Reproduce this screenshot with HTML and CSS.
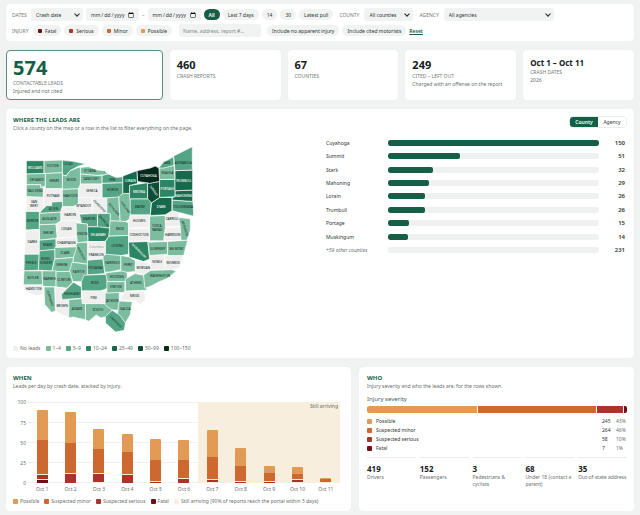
FILE: index.html
```html
<!DOCTYPE html>
<html lang="en">
<head>
<meta charset="utf-8">
<title>Crash leads</title>
<link rel="stylesheet" href="styles.css">
</head>
<body>
<main class="page">
  <form class="card filters">
    <div class="filter-row">
      <label class="caps" for="basis">Dates</label>
      <span class="select basis"><select id="basis"><option>Crash date</option></select></span>
      <input class="date" type="date" aria-label="From">
      <span class="dash">–</span>
      <input class="date" type="date" aria-label="To">
      <button type="button" class="pill active">All</button>
      <button type="button" class="pill">Last 7 days</button>
      <button type="button" class="pill">14</button>
      <button type="button" class="pill">30</button>
      <button type="button" class="pill">Latest pull</button>
      <label class="caps lead" for="county">County</label>
      <span class="select county"><select id="county"><option>All counties</option></select></span>
      <label class="caps lead" for="agency">Agency</label>
      <span class="select agency"><select id="agency"><option>All agencies</option></select></span>
    </div>
    <div class="filter-row">
      <span class="caps injury">Injury</span>
      <button type="button" class="pill"><i class="dot fatal"></i>Fatal</button>
      <button type="button" class="pill"><i class="dot serious"></i>Serious</button>
      <button type="button" class="pill"><i class="dot minor"></i>Minor</button>
      <button type="button" class="pill"><i class="dot possible"></i>Possible</button>
      <input class="search" type="text" aria-label="Search" placeholder="Name, address, report #…">
      <button type="button" class="pill">Include no apparent injury</button>
      <button type="button" class="pill">Include cited motorists</button>
      <a class="reset" href="#">Reset</a>
    </div>
  </form>

  <section class="metrics">
    <div class="card metric hero"><strong>574</strong><span class="caps">Contactable leads</span><small>Injured and not cited</small></div>
    <div class="card metric"><strong>460</strong><span class="caps">Crash reports</span></div>
    <div class="card metric"><strong>67</strong><span class="caps">Counties</span></div>
    <div class="card metric"><strong>249</strong><span class="caps">Cited – left out</span><small>Charged with an offense on the report</small></div>
    <div class="card metric range"><strong>Oct 1 – Oct 11</strong><span class="caps">Crash dates</span><small>2026</small></div>
  </section>

  <section class="card where">
    <header class="head">
      <div><h2>Where the leads are</h2><p>Click a county on the map or a row in the list to filter everything on the page.</p></div>
      <div class="toggle"><button type="button" class="on">County</button><button type="button">Agency</button></div>
    </header>
    <div class="where-body">
      <div>
        <svg class="map" id="map" viewBox="36 9 530 576" role="img" aria-label="Leads by county"></svg>
        <ul class="legend">
          <li><i class="b0"></i>No leads</li><li><i class="b1"></i>1–4</li><li><i class="b2"></i>5–9</li><li><i class="b3"></i>10–24</li><li><i class="b4"></i>25–49</li><li><i class="b5"></i>50–99</li><li><i class="b6"></i>100–150</li>
        </ul>
      </div>
      <ul class="ranks">
        <li><span>Cuyahoga</span><div class="track"><div style="width:100%"></div></div><b>150</b></li>
        <li><span>Summit</span><div class="track"><div style="width:34%"></div></div><b>51</b></li>
        <li><span>Stark</span><div class="track"><div style="width:21.3%"></div></div><b>32</b></li>
        <li><span>Mahoning</span><div class="track"><div style="width:19.3%"></div></div><b>29</b></li>
        <li><span>Lorain</span><div class="track"><div style="width:17.3%"></div></div><b>26</b></li>
        <li><span>Trumbull</span><div class="track"><div style="width:17.3%"></div></div><b>26</b></li>
        <li><span>Portage</span><div class="track"><div style="width:10%"></div></div><b>15</b></li>
        <li><span>Muskingum</span><div class="track"><div style="width:9.3%"></div></div><b>14</b></li>
        <li><em>+59 other counties</em><div class="track"></div><b>231</b></li>
      </ul>
    </div>
  </section>

  <div class="bottom">
    <section class="card when">
      <h2>When</h2><p>Leads per day by crash date, stacked by injury.</p>
      <div class="chart">
        <div class="axis"><span>100</span><span>75</span><span>50</span><span>25</span><span>0</span></div>
        <div class="plot">
          <div class="grid"><i></i><i></i><i></i><i></i><i></i></div>
          <div class="arriving">Still arriving</div>
          <div class="days" id="days"></div>
        </div>
        <div class="ticks"><span>Oct 1</span><span>Oct 2</span><span>Oct 3</span><span>Oct 4</span><span>Oct 5</span><span>Oct 6</span><span>Oct 7</span><span>Oct 8</span><span>Oct 9</span><span>Oct 10</span><span>Oct 11</span></div>
      </div>
      <ul class="legend">
        <li><i class="possible"></i>Possible</li><li><i class="minor"></i>Suspected minor</li><li><i class="serious"></i>Suspected serious</li><li><i class="fatal"></i>Fatal</li><li><i class="late"></i>Still arriving (90% of reports reach the portal within 5 days)</li>
      </ul>
    </section>

    <section class="card who">
      <h2>Who</h2><p>Injury severity and who the leads are, for the rows shown.</p>
      <h3>Injury severity</h3>
      <div class="split"><i class="possible" style="flex-grow:245"></i><i class="minor" style="flex-grow:264"></i><i class="serious" style="flex-grow:58"></i><i class="fatal" style="flex-grow:7"></i></div>
      <table class="severity">
        <tr><th><i class="possible"></i>Possible</th><td>245</td><td>43%</td></tr>
        <tr><th><i class="minor"></i>Suspected minor</th><td>264</td><td>46%</td></tr>
        <tr><th><i class="serious"></i>Suspected serious</th><td>58</td><td>10%</td></tr>
        <tr><th><i class="fatal"></i>Fatal</th><td>7</td><td>1%</td></tr>
      </table>
      <div class="people">
        <div><b>419</b><span>Drivers</span></div>
        <div><b>152</b><span>Passengers</span></div>
        <div><b>3</b><span>Pedestrians &amp; cyclists</span></div>
        <div><b>68</b><span>Under 18 (contact a parent)</span></div>
        <div><b>35</b><span>Out-of-state address</span></div>
      </div>
    </section>
  </div>
</main>
<script src="app.js"></script>
</body>
</html>
```
FILE: styles.css
```css
* { box-sizing: border-box; }
body { margin: 0; background: #f0f3f2; color: #2c3532; font: 5px/8px "Noto Sans", "Open Sans", sans-serif; }
h2, h3, p, ul { margin: 0; padding: 0; }
ul { list-style: none; }
i { font-style: normal; }
button, input, select { font: inherit; color: inherit; margin: 0; border: 0; }
.page { padding: 4px 6px; }
.card { background: #fff; border-radius: 4px; box-shadow: 0 0 1px #dfe5e2; }

.caps { color: #727a77; font-size: 5px; text-transform: uppercase; }
.filters { padding: 4px 6px; display: grid; gap: 3px; }
.filter-row { display: flex; align-items: center; gap: 3px; height: 13px; }
.filter-row > .caps { width: 16px; }
.filter-row > .injury { width: 18px; }
.filter-row > .lead { width: auto; margin: 0 2px 0 3px; }
.select { position: relative; display: block; height: 13px; }
.select::after { content: ""; position: absolute; right: 4px; top: 4px; width: 3px; height: 3px; border: solid #222; border-width: 0 1px 1px 0; transform: rotate(45deg); }
.select select { appearance: none; width: 100%; height: 100%; padding: 0 5px; border-radius: 3px; background: #f0f3f2; }
.basis { width: 52px; }
.county { width: 49px; }
.agency { width: 110px; }
.date { width: 53px; height: 13px; padding: 0 5px 0 4px; border-radius: 3px; background: #f0f3f2; }
.date::-webkit-calendar-picker-indicator { margin: 0; padding: 0; width: 6px; height: 6px; }
.date::-webkit-datetime-edit,
.date::-webkit-datetime-edit-fields-wrapper,
.date::-webkit-datetime-edit-text { padding: 0; }
.dash { color: #727a77; }
.pill { height: 11px; padding: 0 5px; border-radius: 6px; background: #f0f3f2; white-space: nowrap; display: flex; align-items: center; gap: 3px; }
.pill.active { background: #155f47; color: #fff; font-weight: 600; }
.dot { width: 4px; height: 4px; border-radius: 1px; }
.search { width: 82px; height: 13px; margin: 0 3px 0 4px; padding: 0 4px; border-radius: 3px; background: #f0f3f2; }
.search::placeholder { color: #858c89; }
.reset { color: #155f47; font-weight: 600; }

.metrics { display: grid; grid-template-columns: 157fr repeat(4, 111fr); gap: 7px; margin: 9px 0; }
.metric { min-height: 50px; padding: 7px; display: flex; flex-direction: column; }
.metric strong { color: #16201d; font-size: 11px; line-height: 15px; }
.metric .caps { line-height: 8px; }
.metric small { font-size: 5px; line-height: 9px; color: #69716e; }
.hero { border: 1px solid #5c8d7c; padding: 6px 6px 3px; }
.hero strong { color: #155f47; font-size: 20px; line-height: 22px; }
.range strong { font-size: 8px; line-height: 11px; }

h2 { font-size: 6px; line-height: 8px; font-weight: 700; color: #155f47; text-transform: uppercase; }
p { line-height: 8px; color: #69716e; }
.where { padding: 7px 7px 6px; }
.head { display: flex; justify-content: space-between; align-items: flex-start; }
.toggle { display: flex; border: 1px solid #e8ecea; border-radius: 4px; overflow: hidden; }
.toggle button { width: 28px; height: 10px; padding: 0; background: #fff; }
.toggle .on { background: #155f47; color: #fff; font-weight: 600; }
.where-body { display: grid; grid-template-columns: 306fr 301fr; gap: 7px; }
.map { display: block; width: 177px; margin: 11px 0 9px 9px; }
.map text { font: 500 9px "Noto Sans", sans-serif; text-anchor: middle; fill: #20352d; }
.map text.light { fill: #fff; }
.map text.city { fill: #999; font-weight: 400; }
.map path { stroke: #fff; stroke-width: 2; stroke-linejoin: round; }
.b0 { fill: #efefef; background: #efefef; }
.b1 { fill: #7cbda0; background: #7cbda0; }
.b2 { fill: #53a585; background: #53a585; }
.b3 { fill: #2c8564; background: #2c8564; }
.b4 { fill: #17694d; background: #17694d; }
.b5 { fill: #0d4d38; background: #0d4d38; }
.b6 { fill: #052a1e; background: #052a1e; }
.legend { display: flex; gap: 5px; color: #69716e; white-space: nowrap; }
.legend li { display: flex; align-items: center; gap: 2px; }
.legend i { width: 5px; height: 5px; border-radius: 1px; }
.ranks { display: grid; grid-auto-rows: 1fr; height: 121px; margin-top: 4px; }
.ranks li { display: grid; grid-template-columns: 57px 1fr 20px; column-gap: 5px; align-items: center; }
.ranks em { color: #69716e; }
.ranks b { text-align: right; font-weight: 600; font-size: 6px; padding-right: 3px; }
.ranks b { padding-right: 2px; }
.track { height: 6px; border-radius: 2px; background: #eef1f0; overflow: hidden; margin-right: 3px; }
.track div { height: 100%; border-radius: 2px; background: #155f47; }

.possible { background: #e39a54; }
.minor { background: #cd6830; }
.serious { background: #aa342a; }
.fatal { background: #6b1118; }
.late { background: #f7eedd; }

.bottom { display: grid; grid-template-columns: 345fr 275fr; gap: 8px; margin-top: 9px; }
.when, .who { min-height: 144px; padding: 7px 7px 5px; }
.chart { display: grid; grid-template-columns: 14px 1fr; column-gap: 1px; margin: 12px 4px 4px 0; }
.axis { display: flex; flex-direction: column; justify-content: space-between; height: 89px; margin: -4px 0; text-align: right; color: #69716e; padding-right: 1px; }
.plot { display: grid; height: 81px; }
.plot > * { grid-area: 1 / 1; }
.grid { display: flex; flex-direction: column; justify-content: space-between; }
.grid i { height: 1px; background: #eef1f0; }
.arriving { justify-self: end; width: calc(100% * 5 / 11); background: #f7eedd; text-align: right; padding-right: 2px; color: #69716e; }
.days { display: grid; grid-template-columns: repeat(11, 1fr); align-items: end; justify-items: center; height: 81px; }
.day { width: 11px; display: flex; flex-direction: column; border-radius: 1px 1px 0 0; overflow: hidden; }
.day .serious, .day .fatal { border-top: 1px solid #fbeadb; }
.ticks { grid-column: 2; display: grid; grid-template-columns: repeat(11, 1fr); text-align: center; color: #69716e; padding-top: 2px; }

.who { padding: 7px 7px 5px 8px; }
h3 { font-size: 6px; line-height: 8px; font-weight: 400; color: #505956; margin-top: 5px; }
.split { display: flex; gap: 1px; height: 7px; border-radius: 2px; overflow: hidden; margin: 3px 0; }
.severity { width: 100%; border-collapse: collapse; }
.severity th { text-align: left; font-weight: 400; }
.severity th, .severity td { padding: 0; height: 9px; }
.severity td { width: 14px; }
.severity td:last-child { width: 11px; color: #69716e; }
.severity i { display: inline-block; width: 5px; height: 5px; border-radius: 1px; margin-right: 4px; vertical-align: middle; }
.people { display: grid; grid-template-columns: repeat(5, 1fr); gap: 4px; margin-top: 5px; }
.people div { border-top: 1px solid #e8ecea; padding-top: 6px; }
.people b { display: block; color: #16201d; font-size: 8px; line-height: 10px; }
.people span { display: block; line-height: 7px; color: #69716e; }
```
FILE: app.js
```js
// name, bucket, outline, label x, label y, label angle
const counties = [
  ["WILLIAMS", 3, "49,62 102,62 102,101 49,102", 75, 86],
  ["FULTON", 1, "102,62 157,60 157,98 102,101", 128, 80],
  ["LUCAS", 2, "157,60 190,64 228,72 205,78 180,92 168,108 157,104", 174, 76],
  ["WOOD", 1, "157,104 168,108 180,92 205,82 211,82 211,146 157,148", 184, 122],
  ["OTTAWA", 1, "211,82 235,80 262,90 285,92 294,104 258,106 211,102", 239, 97],
  ["SANDUSKY", 1, "211,102 258,106 276,106 276,132 211,132", 243, 121],
  ["ERIE", 2, "276,106 295,102 318,112 338,110 338,128 276,130", 307, 123],
  ["DEFIANCE", 1, "49,102 106,100 106,138 92,142 92,134 49,134", 80, 122],
  ["HENRY", 1, "106,100 157,98 157,146 106,146", 133, 125],
  ["PAULDING", 1, "49,134 92,134 92,142 100,142 100,172 49,170", 75, 156],
  ["PUTNAM", 0, "100,142 106,146 157,146 157,184 125,186 125,196 110,196 100,206", 129, 171],
  ["HANCOCK", 1, "157,148 205,146 205,190 190,200 157,200", 181, 171],
  ["SENECA", 0, "205,146 211,132 276,132 276,174 205,172", 245, 155],
  ["HURON", 2, "276,130 338,128 338,160 326,172 276,174", 307, 153],
  ["VAN|WERT", 0, "49,170 100,172 100,206 95,212 49,214", 72, 189],
  ["ALLEN", 2, "95,210 110,196 125,196 125,186 157,184 157,200 152,216 88,220", 130, 209],
  ["HARDIN", 0, "157,200 190,200 208,220 214,250 200,242 152,242 152,214", 180, 228],
  ["WYANDOT", 0, "190,200 205,190 205,172 246,172 246,222 208,220", 221, 200],
  ["CRAWFORD", 0, "246,172 290,174 290,222 246,220", 266, 200, 45],
  ["RICHLAND", 1, "290,174 326,170 330,244 300,242 300,222 290,222", 309, 210, 50],
  ["ASHLAND", 1, "326,170 338,160 360,160 362,236 345,244 330,244", 343, 203, 55],
  ["MERCER", 2, "47,214 88,214 88,268 47,270", 67, 246],
  ["AUGLAIZE", 1, "88,220 152,216 152,244 138,252 88,254", 118, 240],
  ["MARION", 2, "208,222 262,220 262,260 232,260 232,252 214,250", 237, 240],
  ["MORROW", 2, "262,220 300,220 300,264 262,262", 279, 245, 50],
  ["SHELBY", 1, "88,254 138,252 142,294 88,300", 115, 281],
  ["LOGAN", 0, "138,252 152,242 200,240 198,256 198,290 142,294", 169, 271],
  ["UNION", 1, "198,248 214,250 232,252 234,304 200,308", 216, 283],
  ["DELAWARE", 3, "232,260 264,260 300,264 296,290 284,304 234,304", 264, 287],
  ["KNOX", 1, "300,242 345,244 355,248 355,286 296,288", 329, 270],
  ["DARKE", 0, "47,270 88,268 88,342 43,342", 67, 309],
  ["MIAMI", 2, "88,300 138,296 138,328 88,332", 113, 318],
  ["CHAMPAIGN", 0, "138,294 200,290 202,320 138,322", 169, 310],
  ["FRANKLIN", 0, "234,304 286,304 286,356 232,360", 258, 347],
  ["LICKING", 2, "286,304 296,288 355,286 355,342 332,346 286,344", 322, 319],
  ["MADISON", 1, "200,308 232,306 232,372 188,366 192,340", 211, 341, 62],
  ["CLARK", 1, "134,322 200,320 190,352 134,356", 165, 341],
  ["PREBLE", 2, "43,342 88,342 85,390 42,392", 64, 370],
  ["MONT-|GOMERY", 2, "88,332 134,328 134,356 126,392 85,390", 108, 358],
  ["GREENE", 1, "134,356 190,352 188,366 178,394 126,394", 156, 378],
  ["FAYETTE", 1, "186,366 232,372 232,404 222,424 188,424 178,394", 206, 399],
  ["PICKAWAY", 2, "232,360 278,356 284,400 232,404", 257, 385],
  ["ROSS", 2, "222,405 290,402 292,444 272,452 214,452 214,424", 254, 432],
  ["FAIRFIELD", 1, "278,350 286,342 332,346 332,388 300,395 284,396", 307, 372],
  ["BUTLER", 1, "42,392 96,392 98,434 40,434", 69, 417],
  ["WARREN", 1, "96,392 138,392 138,440 98,438", 118, 419],
  ["CLINTON", 1, "138,394 180,394 188,426 170,444 138,440", 161, 422],
  ["HAMILTON", 0, "40,434 98,434 102,462 80,466 62,460 42,450", 71, 450],
  ["CLERMONT", 1, "102,440 134,440 136,512 124,516 104,492", 117, 475, 72],
  ["BROWN", 0, "134,440 168,444 154,462 156,476 176,478 176,530 158,524 138,512", 156, 501],
  ["HIGHLAND", 2, "154,462 180,436 190,426 214,440 214,474 156,478", 186, 464],
  ["ADAMS", 1, "176,478 216,475 226,490 226,538 205,534 190,530 176,532", 201, 510],
  ["PIKE", 0, "214,452 288,452 288,490 216,490", 251, 475],
  ["SCIOTO", 1, "226,490 288,490 300,500 306,512 286,530 272,532 258,524 236,543 226,538", 263, 511],
  ["JACKSON", 1, "285,458 327,456 327,510 304,508 285,494", 306, 484],
  ["VINTON", 1, "290,424 344,424 344,456 290,458", 317, 444],
  ["HOCKING", 1, "286,398 350,390 352,424 292,424", 320, 413],
  ["PERRY", 1, "332,346 357,350 376,362 376,394 350,396 332,392", 354, 377],
  ["MUSKINGUM", 3, "355,306 413,304 418,356 400,364 357,350", 384, 334, 45],
  ["MORGAN", 0, "376,362 400,364 420,372 422,394 400,402 374,400", 399, 387],
  ["ATHENS", 1, "346,416 374,400 400,405 410,450 346,452", 377, 431],
  ["MEIGS", 0, "344,454 402,452 406,480 388,492 376,480 327,480", 373, 471],
  ["GALLIA", 1, "327,482 366,484 360,524 345,548 322,520", 345, 508],
  ["LAWRENCE", 2, "286,528 306,510 328,524 346,548 342,570 316,575 286,548", 315, 547, 45],
  ["WASHINGTON", 1, "400,404 422,390 485,388 498,393 470,415 445,425 425,436 404,444", 449, 410],
  ["NOBLE", 0, "418,344 462,342 464,388 422,390", 441, 368],
  ["MONROE", 0, "464,346 520,346 506,385 485,388 464,388", 489, 370],
  ["GUERNSEY", 1, "413,306 472,304 472,342 418,346", 443, 328],
  ["BELMONT", 1, "472,304 532,300 520,346 472,346", 499, 328],
  ["HARRISON", 0, "465,262 512,260 512,300 460,302", 487, 287],
  ["CARROLL", 0, "465,216 505,212 510,258 465,260", 486, 241],
  ["JEFFERSON", 1, "505,232 540,236 540,270 530,300 512,300 510,260", 521, 266, 72],
  ["TUSCA-|RAWAS", 1, "418,228 465,226 465,262 460,302 418,302", 441, 260],
  ["COSHOCTON", 0, "355,264 418,264 418,302 355,304", 387, 287],
  ["HOLMES", 0, "360,224 418,224 418,262 355,264 355,246", 387, 247],
  ["WAYNE", 2, "360,176 424,176 420,224 360,224", 389, 204],
  ["STARK", 4, "424,188 448,172 485,172 485,212 465,224 420,226", 453, 203],
  ["COLUMBIANA", 2, "486,180 548,184 550,228 486,212", 518, 205],
  ["MAHONING", 4, "494,152 547,150 547,184 486,180 486,172 494,170", 520, 171],
  ["SUMMIT", 5, "412,130 448,124 448,172 424,188 412,176", 428, 154, 55],
  ["PORTAGE", 3, "448,118 494,118 494,170 448,172", 471, 149],
  ["TRUMBULL", 4, "494,92 547,90 547,150 494,152", 520, 126],
  ["ASHTABULA", 2, "490,48 546,20 546,90 494,92", 519, 72],
  ["GEAUGA", 1, "446,84 492,76 494,118 448,118", 471, 103],
  ["LAKE", 2, "445,84 460,66 490,50 491,76 460,84", 470, 73],
  ["CUYAHOGA", 6, "380,92 420,84 435,78 446,84 448,124 418,130 382,124", 415, 110],
  ["MEDINA", 3, "358,136 412,128 412,176 358,176", 386, 158],
  ["LORAIN", 4, "338,108 380,92 382,130 358,136 358,160 338,160", 360, 126]
];
document.getElementById("map").innerHTML = counties.map(([name, bucket, outline]) =>
  `<path class="b${bucket}" d="M${outline.replace(/ /g, "L")}Z"/>`
).join("") + counties.map(([name, bucket, , x, y, angle = 0]) =>
  `<text class="${bucket > 2 ? "light" : ""}" transform="translate(${x} ${y}) rotate(${angle})">` +
  name.split("|").map((line, i) => `<tspan x="0" dy="${i * 13}">${line}</tspan>`).join("") + "</text>"
).join("") + '<text class="city" x="259" y="324">Columbus</text>';

// possible, minor, serious, fatal
const days = [
  [37, 42, 7, 5], [38, 37, 13, 0], [25, 29, 11, 2], [22, 28, 11, 0], [26, 26, 3, 0], [24, 23, 6, 0],
  [33, 28, 3, 2], [22, 19, 3, 0], [9, 10, 3, 0], [9, 5, 4, 2], [1, 4, 2, 0]
];
const levels = ["possible", "minor", "serious", "fatal"];
document.getElementById("days").innerHTML = days.map(day => {
  const total = day.reduce((a, b) => a + b);
  return `<div class="day" style="height:${total}%">` +
    day.map((n, i) => n ? `<i class="${levels[i]}" style="height:${n / total * 100}%"></i>` : "").join("") + "</div>";
}).join("");
```
